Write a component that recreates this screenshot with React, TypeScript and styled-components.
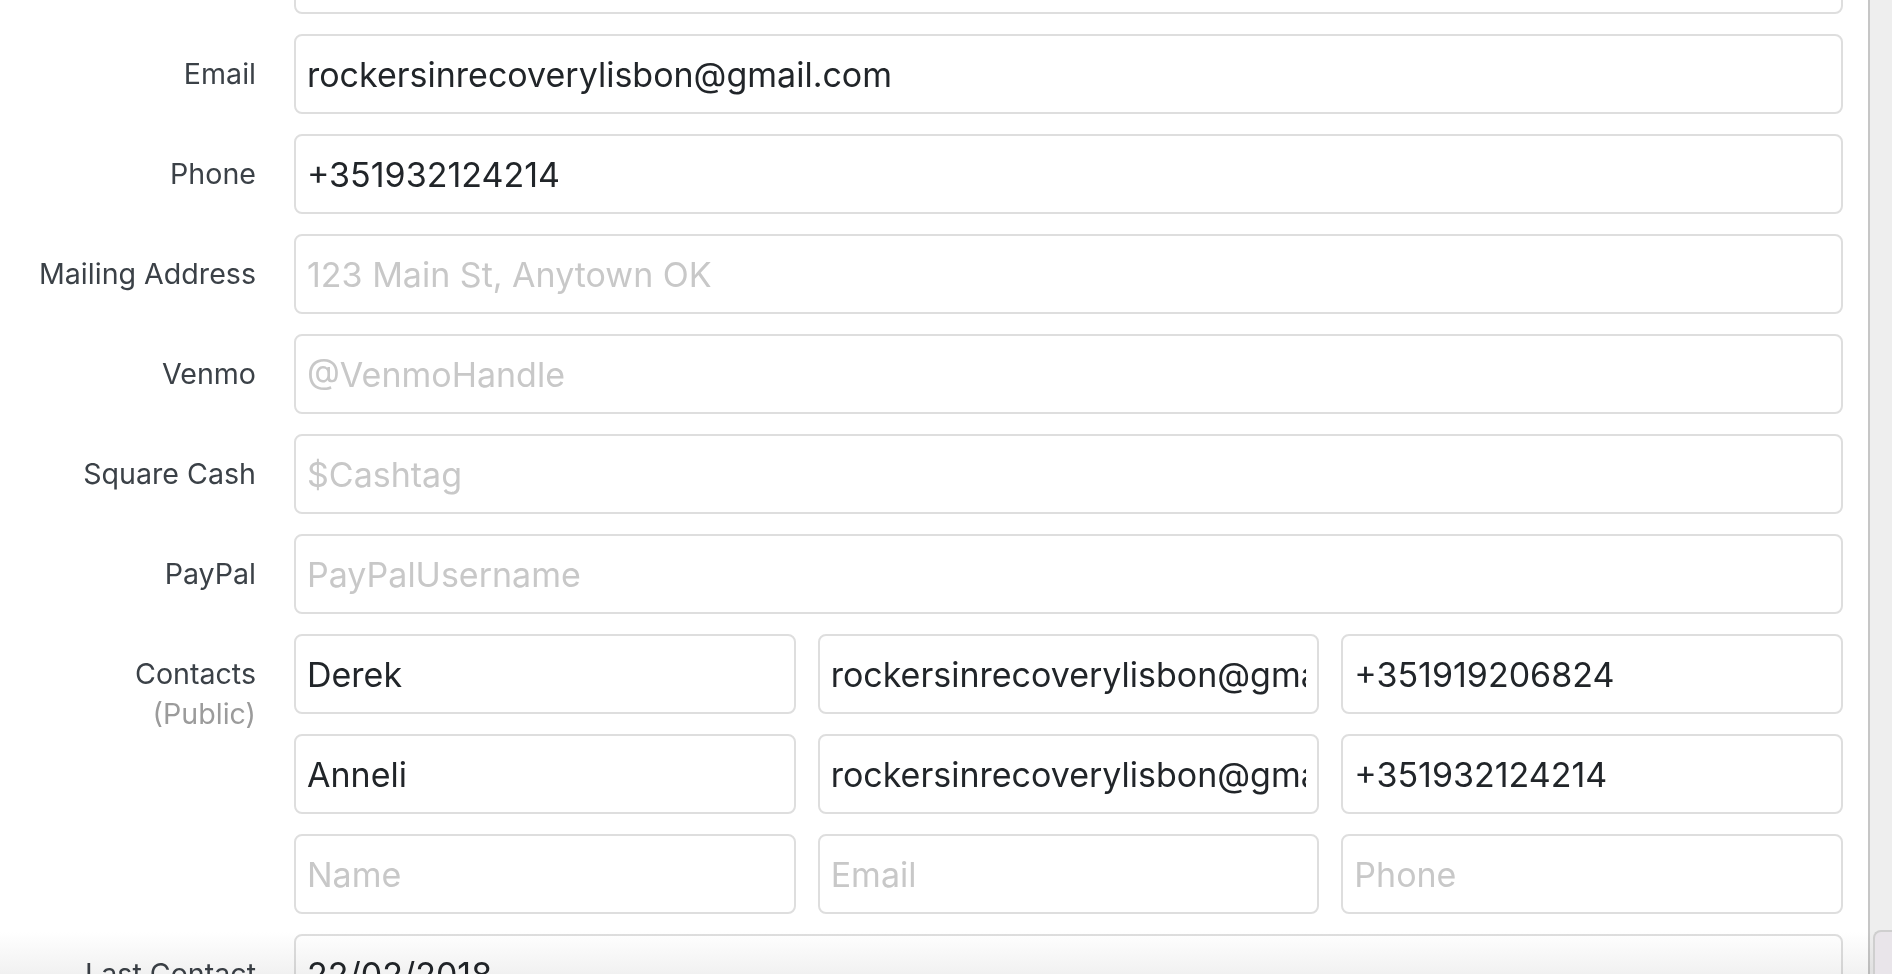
import React from "react";
import styled, { createGlobalStyle } from "styled-components";

const Global = createGlobalStyle`
  html, body {
    margin: 0;
    padding: 0;
    background: #ffffff;
    overflow: hidden;
  }
  body {
    font-family: Inter, "Liberation Sans", Arial, sans-serif;
  }
`;

const Window = styled.div`
  position: relative;
  display: flex;
  height: 974px;
  overflow: hidden;
  background: #ffffff;
`;

const Main = styled.main`
  flex: 1;
  min-width: 0;
  overflow: hidden;
  border-right: 2px solid #c6c6c6;
`;

const Gutter = styled.aside`
  flex: none;
  width: 22px;
  background: #eeeeee;
`;

const Form = styled.form`
  display: grid;
  grid-template-columns: 256px 1fr;
  column-gap: 38px;
  row-gap: 20px;
  margin-top: -66px;
  padding-right: 25px;
`;

const Label = styled.label`
  display: flex;
  flex-direction: column;
  align-items: flex-end;
  padding-top: 20px;
  font-size: 28.6px;
  line-height: 40px;
  color: #3b4147;
  text-align: right;
  white-space: nowrap;
`;

const Note = styled.span`
  color: #9b9b9b;
`;

const Field = styled.input`
  box-sizing: border-box;
  width: 100%;
  height: 80px;
  margin: 0;
  padding: 0 11px;
  border: 2px solid #dedede;
  border-radius: 8px;
  background: #ffffff;
  font-family: Inter, "Liberation Sans", Arial, sans-serif;
  font-size: 34px;
  color: #212529;
  outline: none;
  &::placeholder {
    color: #c8c8c8;
    opacity: 1;
  }
`;

const ContactGrid = styled.div`
  display: grid;
  grid-template-columns: repeat(3, minmax(0, 1fr));
  column-gap: 22px;
  row-gap: 20px;
`;

const BottomFade = styled.div`
  position: absolute;
  left: 0;
  right: 0;
  bottom: 0;
  height: 42px;
  pointer-events: none;
  mix-blend-mode: multiply;
  background: linear-gradient(to bottom, #ffffff, #f1f1f1);
`;

const CornerTab = styled.div`
  position: absolute;
  right: 0;
  bottom: 0;
  width: 17px;
  height: 42px;
  background: #e9e5ea;
  border-top: 2px solid #cfcfcf;
  border-left: 2px solid #cfcfcf;
  border-top-left-radius: 8px;
`;

type Row = { label: string; value?: string; placeholder?: string };

const rows: Row[] = [
  { label: "Website", value: "" },
  { label: "Email", value: "rockersinrecoverylisbon@gmail.com" },
  { label: "Phone", value: "+351932124214" },
  { label: "Mailing Address", placeholder: "123 Main St, Anytown OK" },
  { label: "Venmo", placeholder: "@VenmoHandle" },
  { label: "Square Cash", placeholder: "$Cashtag" },
  { label: "PayPal", placeholder: "PayPalUsername" },
];

const contacts = [
  { name: "Derek", email: "rockersinrecoverylisbon@gmail.com", phone: "+351919206824" },
  { name: "Anneli", email: "rockersinrecoverylisbon@gmail.com", phone: "+351932124214" },
  { name: "", email: "", phone: "" },
];

export default function App() {
  return (
    <>
      <Global />
      <Window>
        <Main>
          <Form onSubmit={(e) => e.preventDefault()}>
            {rows.map((r) => (
              <React.Fragment key={r.label}>
                <Label>{r.label}</Label>
                <Field
                  defaultValue={r.value}
                  placeholder={r.placeholder}
                  aria-label={r.label}
                />
              </React.Fragment>
            ))}
            <Label>
              Contacts
              <Note>(Public)</Note>
            </Label>
            <ContactGrid>
              {contacts.map((c, i) => (
                <React.Fragment key={i}>
                  <Field defaultValue={c.name} placeholder="Name" />
                  <Field defaultValue={c.email} placeholder="Email" />
                  <Field defaultValue={c.phone} placeholder="Phone" />
                </React.Fragment>
              ))}
            </ContactGrid>
            <Label>Last Contact</Label>
            <Field defaultValue="22/02/2018" aria-label="Last Contact" />
          </Form>
        </Main>
        <Gutter />
        <BottomFade />
        <CornerTab />
      </Window>
    </>
  );
}
